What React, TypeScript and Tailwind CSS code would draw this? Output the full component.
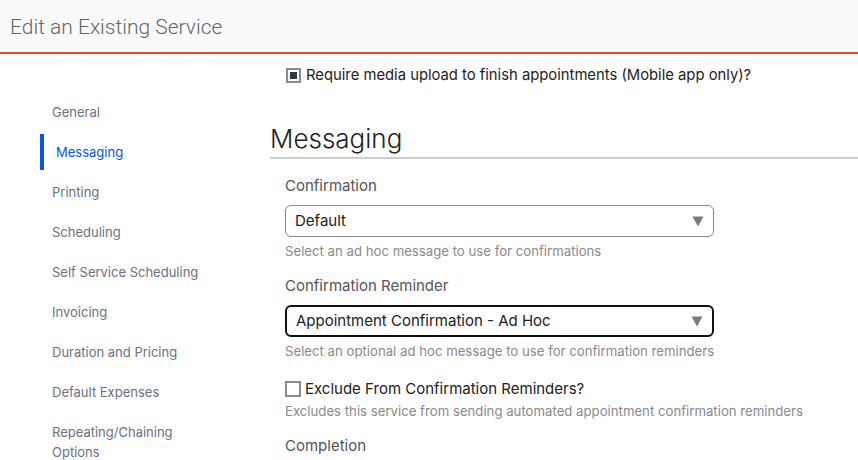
const navItems = [
  "General",
  "Messaging",
  "Printing",
  "Scheduling",
  "Self Service Scheduling",
  "Invoicing",
  "Duration and Pricing",
  "Default Expenses",
  "Repeating/Chaining Options",
];

const SelectBox = ({ value, active }: { value: string; active?: boolean }) => (
  <div
    className={`flex h-8 w-[429px] items-center justify-between rounded-md bg-white pl-[9px] pr-[9px] text-[15px] text-[#222] ${
      active ? "border-2 border-[#111]" : "border border-[#8a8a8a]"
    }`}
  >
    <span>{value}</span>
    <svg width="12" height="11" viewBox="0 0 12 11">
      <path d="M0.5 0.5 H11.5 L6 10.5 Z" fill="#7a7a7a" />
    </svg>
  </div>
);

export default function App() {
  return (
    <div className="h-[460px] w-[858px] overflow-hidden bg-white font-['Inter',sans-serif]">
      {/* Header */}
      <header className="flex h-[54px] items-center border-b-2 border-[#f5461e] bg-[#fafafa] pl-[10px] pt-1">
        <h1 className="font-['Roboto',sans-serif] text-[21px] font-light text-[#666]">Edit an Existing Service</h1>
      </header>

      <div className="flex">
        {/* Sidebar */}
        <nav className="w-[270px] shrink-0 pl-10 pt-10">
          <ul className="flex flex-col gap-1">
            {navItems.map((item) => (
              <li
                key={item}
                className={`w-[180px] py-2 text-[13px] leading-5 ${
                  item === "Messaging"
                    ? "border-l-4 border-[#0b55e6] pl-3 text-[#0b55e6]"
                    : "pl-3 text-[#6b7280]"
                }`}
              >
                {item === "Repeating/Chaining Options" ? (
                  <>
                    Repeating/Chaining
                    <br />
                    Options
                  </>
                ) : (
                  item
                )}
              </li>
            ))}
          </ul>
        </nav>

        {/* Main */}
        <main className="flex-1">
          <label className="ml-4 mt-[11px] flex h-5 items-center gap-[5px] text-[14.8px] text-[#222]">
            <span className="flex h-[15px] w-[15px] items-center justify-center border-2 border-[#8a8a8a] bg-white">
              <span className="h-[7px] w-[7px] bg-[#2e3a4b]" />
            </span>
            Require media upload to finish appointments (Mobile app only)?
          </label>

          <h2 className="mt-[35px] border-b-2 border-[#cccccc] text-[26px] leading-[37px] font-light text-[#222]">
            Messaging
          </h2>

          <div className="pl-[15px]">
            <div className="mt-[17px] text-[15px] leading-5 text-[#555]">Confirmation</div>
            <div className="mt-[9px]">
              <SelectBox value="Default" />
            </div>
            <div className="mt-1 text-[13.2px] leading-5 text-[#8a8a8a]">
              Select an ad hoc message to use for confirmations
            </div>

            <div className="mt-[15px] text-[15px] leading-5 text-[#555]">Confirmation Reminder</div>
            <div className="mt-[9px]">
              <SelectBox value="Appointment Confirmation - Ad Hoc" active />
            </div>
            <div className="mt-1 text-[13.2px] leading-5 text-[#8a8a8a]">
              Select an optional ad hoc message to use for confirmation reminders
            </div>

            <label className="mt-[18px] flex h-5 items-center gap-[4px] text-[15px] text-[#222]">
              <span className="h-4 w-4 border-2 border-[#8a8a8a] bg-white" />
              Exclude From Confirmation Reminders?
            </label>
            <div className="mt-[2px] text-[13.2px] leading-5 text-[#8a8a8a]">
              Excludes this service from sending automated appointment confirmation reminders
            </div>

            <div className="mt-[15px] text-[15px] leading-5 text-[#555]">Completion</div>
          </div>
        </main>
      </div>
    </div>
  );
}
